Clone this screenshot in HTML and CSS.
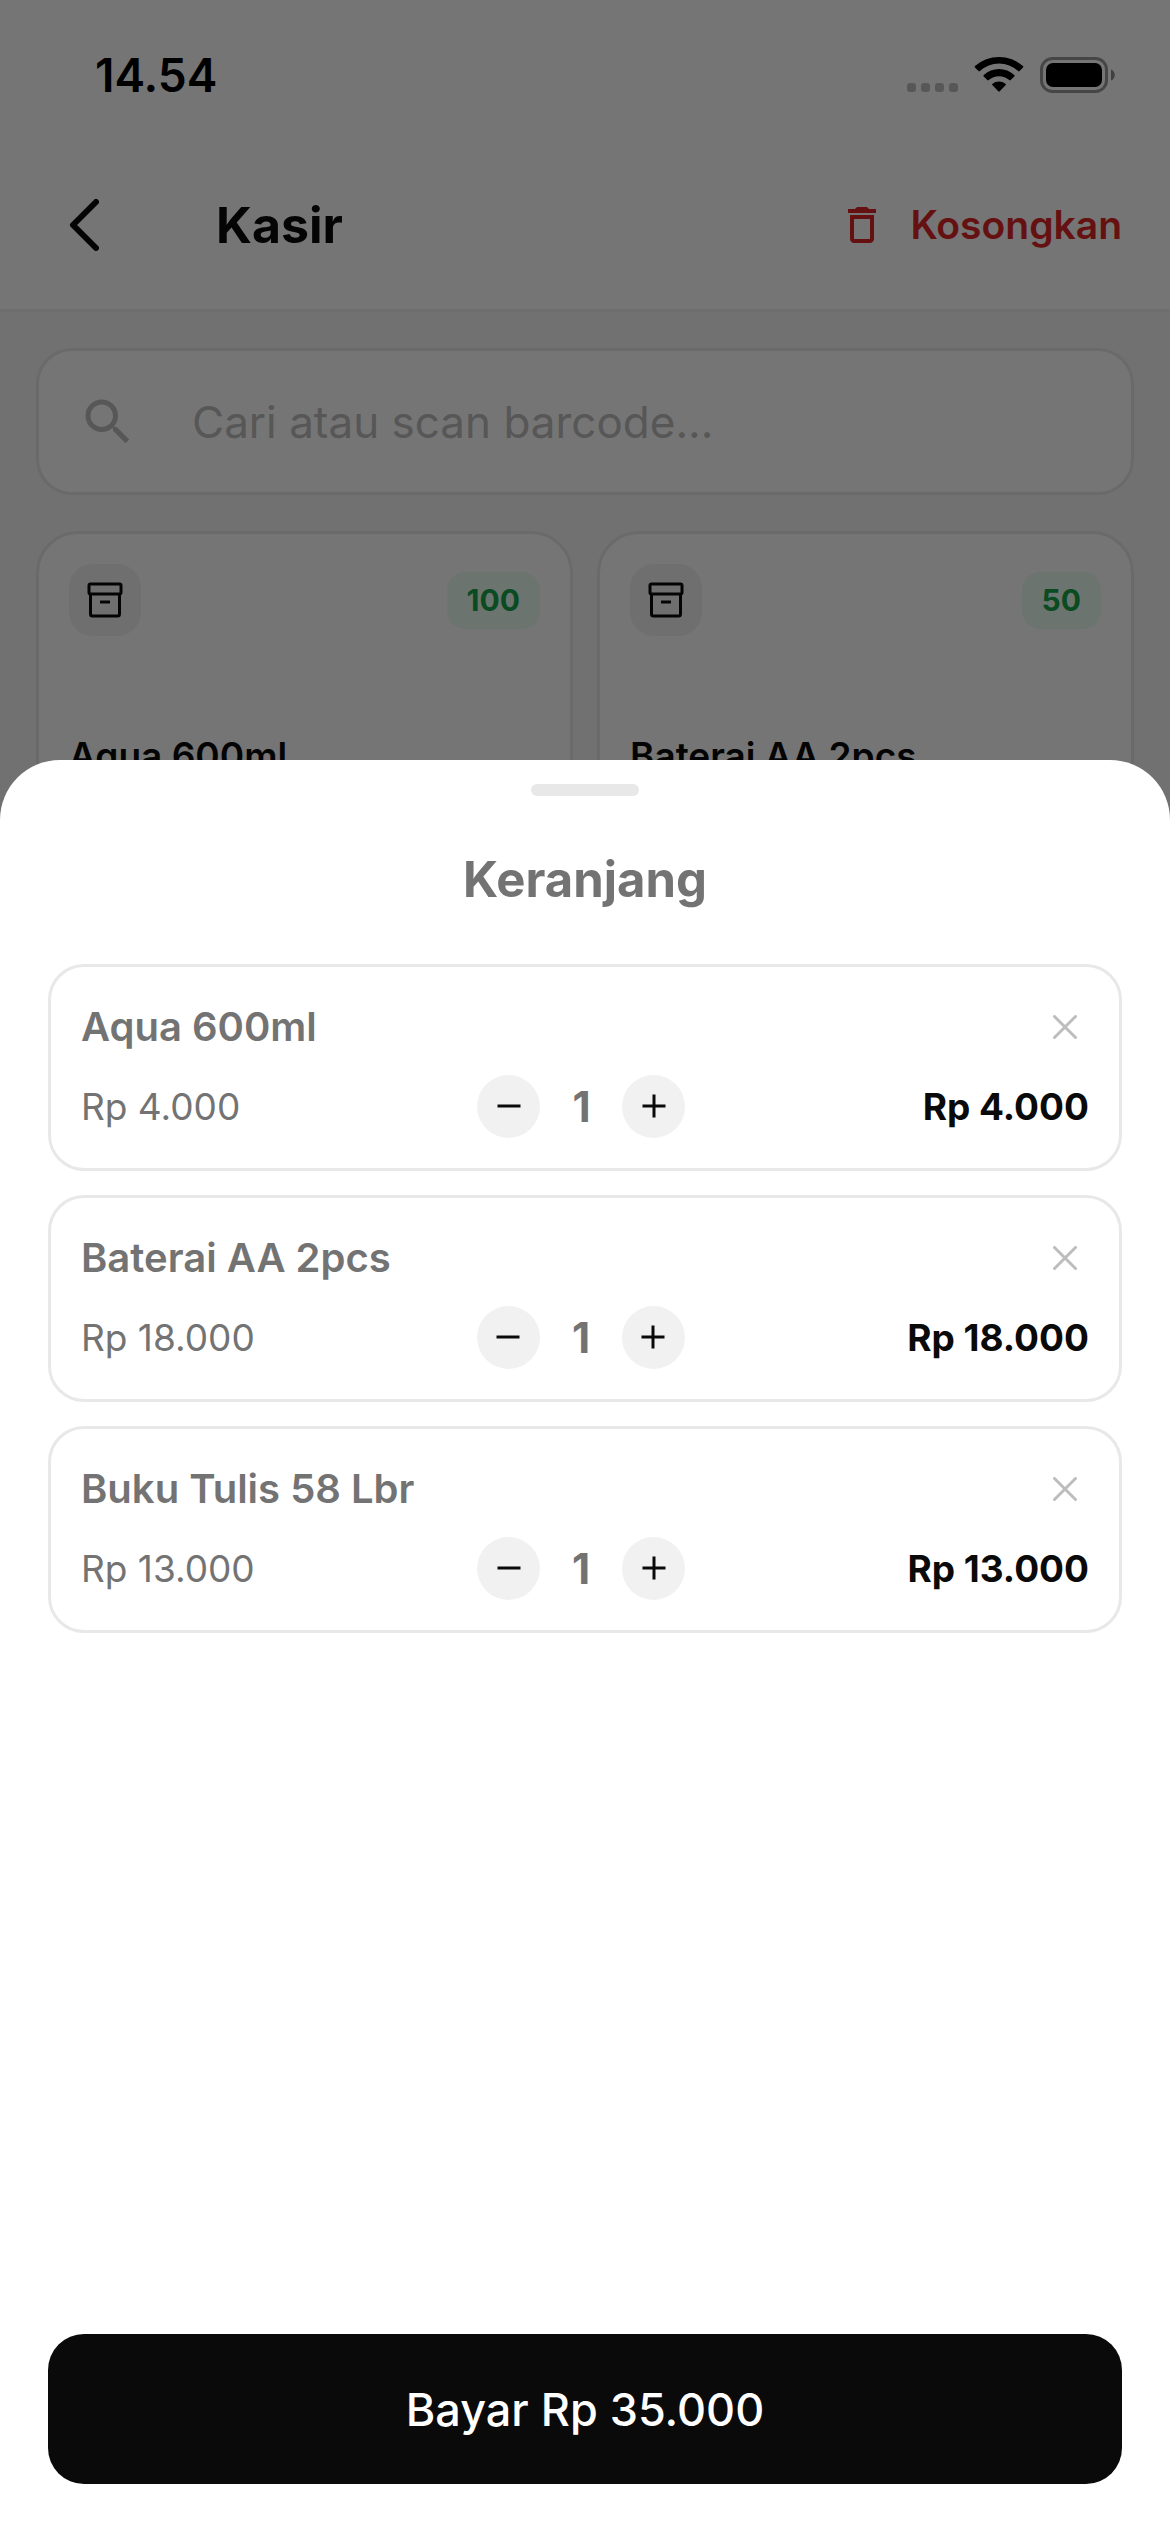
FILE: index.html
```html
<!DOCTYPE html>
<html lang="id">
<head>
  <meta charset="UTF-8" />
  <meta name="viewport" content="width=device-width, initial-scale=1.0"/>
  <title>Kasir</title>
  <link rel="stylesheet" href="styles.css">
</head>
<body>

<svg class="sprite" aria-hidden="true">
  <symbol id="box" viewBox="0 0 36 36">
    <rect x="2" y="2" width="32" height="10" rx="1.5"/>
    <path d="M3.500 12v20a2 2 0 0 0 2 2h25a2 2 0 0 0 2-2V12"/>
    <path d="M13 20h10"/>
  </symbol>
  <symbol id="minus" viewBox="0 0 24 24"><path d="M0.500 12h23"/></symbol>
  <symbol id="plus" viewBox="0 0 24 24"><path d="M0.500 12h23M12 0.500v23"/></symbol>
  <symbol id="close" viewBox="0 0 24 24"><path d="M1.500 1.500l21 21M22.500 1.500l-21 21"/></symbol>
</svg>

<div class="app">
  <header class="topbar">
    <div class="status">
      <span class="clock">14.54</span>
      <svg class="status-icons" viewBox="0 0 210 38" aria-hidden="true">
        <g opacity="0.25">
          <rect x="1" y="27" width="9" height="9" rx="3"/>
          <rect x="15" y="27" width="9" height="9" rx="3"/>
          <rect x="29" y="27" width="9" height="9" rx="3"/>
          <rect x="43" y="27" width="9" height="9" rx="3"/>
        </g>
        <path d="M69 11.500a1 1 0 0 1 0-1.400a36 36 0 0 1 48 0a1 1 0 0 1 0 1.400l-3.500 3.600a1 1 0 0 1-1.400 0a28 28 0 0 0-38.200 0a1 1 0 0 1-1.400 0z"/>
        <path d="M77.700 20.400a1 1 0 0 1 0-1.400a22.500 22.500 0 0 1 30.600 0a1 1 0 0 1 0 1.400l-3.600 3.700a1 1 0 0 1-1.400 0a15.500 15.500 0 0 0-20.600 0a1 1 0 0 1-1.400 0z"/>
        <path d="M86.500 29.300a1 1 0 0 1 0-1.500a10 10 0 0 1 13 0a1 1 0 0 1 0 1.500l-5.800 6a1 1 0 0 1-1.400 0z"/>
        <rect x="135.500" y="2.500" width="65" height="33" rx="11" fill="none" stroke="#000" stroke-width="3" opacity="0.4"/>
        <rect x="140" y="7" width="56" height="24" rx="7"/>
        <path d="M205 13.500c5 1.500 5 9.500 0 11z" opacity="0.45"/>
      </svg>
    </div>
    <nav class="appbar">
      <button class="back" aria-label="Kembali">
        <svg viewBox="0 0 30 52" aria-hidden="true"><path d="M27 3L4 26l23 23"/></svg>
      </button>
      <h1>Kasir</h1>
      <button class="clear">
        <svg viewBox="0 0 24 24" aria-hidden="true"><path d="M6 19c0 1.100.9 2 2 2h8c1.100 0 2-.9 2-2V7H6v12zM8 9h8v10H8V9zm7.500-5l-1-1h-5l-1 1H5v2h14V4z"/></svg>
        Kosongkan
      </button>
    </nav>
  </header>

  <main class="content">
    <label class="search">
      <svg viewBox="0 0 24 24" aria-hidden="true"><path d="M15.500 14h-.79l-.28-.27A6.471 6.471 0 0 0 16 9.500 6.500 6.500 0 1 0 9.500 16c1.610 0 3.090-.59 4.230-1.570l.27.28v.79l5 4.990L20.490 19l-4.990-5zm-6 0C7.010 14 5 11.990 5 9.500S7.010 5 9.500 5 14 7.010 14 9.500 11.990 14 9.500 14z"/></svg>
      <input type="text" aria-label="Cari produk" placeholder="Cari atau scan barcode...">
    </label>

    <div class="products">
      <article class="product">
        <div class="product-top">
          <span class="tile"><svg aria-hidden="true"><use href="#box"/></svg></span>
          <span class="stock">100</span>
        </div>
        <h2>Aqua 600ml</h2>
      </article>
      <article class="product">
        <div class="product-top">
          <span class="tile"><svg aria-hidden="true"><use href="#box"/></svg></span>
          <span class="stock">50</span>
        </div>
        <h2>Baterai AA 2pcs</h2>
      </article>
    </div>
  </main>
</div>

<div class="scrim"></div>

<section class="sheet" role="dialog" aria-labelledby="cart-title">
  <div class="handle"></div>
  <h2 class="sheet-title" id="cart-title">Keranjang</h2>

  <ul class="cart">
    <li class="item">
      <div class="item-row item-head">
        <h3>Aqua 600ml</h3>
        <button class="remove" aria-label="Hapus Aqua 600ml"><svg aria-hidden="true"><use href="#close"/></svg></button>
      </div>
      <div class="item-row">
        <span class="price">Rp 4.000</span>
        <div class="qty">
          <button aria-label="Kurangi"><svg aria-hidden="true"><use href="#minus"/></svg></button>
          <span>1</span>
          <button aria-label="Tambah"><svg aria-hidden="true"><use href="#plus"/></svg></button>
        </div>
        <span class="total">Rp 4.000</span>
      </div>
    </li>
    <li class="item">
      <div class="item-row item-head">
        <h3>Baterai AA 2pcs</h3>
        <button class="remove" aria-label="Hapus Baterai AA 2pcs"><svg aria-hidden="true"><use href="#close"/></svg></button>
      </div>
      <div class="item-row">
        <span class="price">Rp 18.000</span>
        <div class="qty">
          <button aria-label="Kurangi"><svg aria-hidden="true"><use href="#minus"/></svg></button>
          <span>1</span>
          <button aria-label="Tambah"><svg aria-hidden="true"><use href="#plus"/></svg></button>
        </div>
        <span class="total">Rp 18.000</span>
      </div>
    </li>
    <li class="item">
      <div class="item-row item-head">
        <h3>Buku Tulis 58 Lbr</h3>
        <button class="remove" aria-label="Hapus Buku Tulis 58 Lbr"><svg aria-hidden="true"><use href="#close"/></svg></button>
      </div>
      <div class="item-row">
        <span class="price">Rp 13.000</span>
        <div class="qty">
          <button aria-label="Kurangi"><svg aria-hidden="true"><use href="#minus"/></svg></button>
          <span>1</span>
          <button aria-label="Tambah"><svg aria-hidden="true"><use href="#plus"/></svg></button>
        </div>
        <span class="total">Rp 13.000</span>
      </div>
    </li>
  </ul>

  <button class="pay">Bayar Rp 35.000</button>
</section>

</body>
</html>
```
FILE: styles.css
```css
* { margin: 0; padding: 0; box-sizing: border-box; }

body {
  font-family: Inter, Roboto, sans-serif;
  background: #f6f6f6;
  color: #0a0a0a;
  height: 100vh;
  overflow: hidden;
}

button {
  font: inherit;
  color: inherit;
  background: none;
  border: none;
  cursor: pointer;
}

svg { display: block; }

.sprite {
  position: absolute;
  width: 0;
  height: 0;
}

/* header */
.topbar {
  background: #fff;
  border-bottom: 3px solid #f0f0f0;
}

.status {
  display: flex;
  justify-content: space-between;
  align-items: center;
  padding: 45px 54px 36px 95px;
  color: #000;
}

.clock {
  font-size: 46px;
  font-weight: 600;
  line-height: 60px;
}

.status-icons {
  width: 210px;
  height: 38px;
}

.appbar {
  display: flex;
  align-items: center;
  height: 168px;
  padding: 0 48px 0 12px;
}

.back {
  width: 144px;
  height: 144px;
  display: grid;
  place-items: center;
}

.back svg {
  width: 30px;
  height: 52px;
  fill: none;
  stroke: #0a0a0a;
  stroke-width: 6;
  stroke-linecap: round;
  stroke-linejoin: round;
}

.appbar h1 {
  flex: 1;
  padding-left: 60px;
  font-size: 50px;
  font-weight: 700;
}

.clear {
  display: flex;
  align-items: center;
  gap: 24px;
  font-size: 39px;
  font-weight: 600;
  line-height: 48px;
  color: #dc2626;
}

.clear svg {
  width: 48px;
  height: 48px;
  fill: #dc2626;
}

/* product list */
.content {
  display: flex;
  flex-direction: column;
  gap: 36px;
  padding: 36px;
}

.search {
  display: flex;
  align-items: center;
  gap: 54px;
  height: 147px;
  padding: 0 39px;
  background: #fff;
  border: 3px solid #e8e8e8;
  border-radius: 36px;
}

.search svg {
  width: 60px;
  height: 60px;
  fill: #bdbdbd;
}

.search input {
  flex: 1;
  min-width: 0;
  height: 54px;
  font: inherit;
  font-size: 44px;
  border: none;
  outline: none;
  background: none;
}

.search input::placeholder { color: #bdbdbd; }

.products {
  display: grid;
  grid-template-columns: 1fr 1fr;
  gap: 24px;
}

.product {
  padding: 30px;
  min-height: 420px;
  background: #fff;
  border: 3px solid #e8e8e8;
  border-radius: 42px;
}

.product-top {
  display: flex;
  justify-content: space-between;
  align-items: center;
  margin-bottom: 96px;
}

.tile {
  display: grid;
  place-items: center;
  width: 72px;
  height: 72px;
  background: #f1f1f1;
  border-radius: 24px;
}

.tile svg {
  width: 36px;
  height: 36px;
  fill: none;
  stroke: #0a0a0a;
  stroke-width: 3;
}

.stock {
  padding: 9px 20px;
  font-size: 30px;
  font-weight: 700;
  line-height: 39px;
  color: #16a34a;
  background: #ecfdf3;
  border-radius: 18px;
}

.product h2 {
  font-size: 37px;
  font-weight: 600;
  line-height: 48px;
}

/* cart sheet */
.scrim {
  position: fixed;
  inset: 0;
  background: rgba(0, 0, 0, 0.54);
}

.sheet {
  position: fixed;
  left: 0;
  right: 0;
  bottom: 0;
  height: 70vh;
  display: flex;
  flex-direction: column;
  padding: 24px 48px 48px;
  background: #fff;
  border-radius: 60px 60px 0 0;
}

.handle {
  align-self: center;
  width: 108px;
  height: 12px;
  background: #e8e8e8;
  border-radius: 6px;
}

.sheet-title {
  margin: 54px 0;
  font-size: 49px;
  font-weight: 700;
  line-height: 60px;
  text-align: center;
  color: #737373;
}

.cart {
  flex: 1;
  display: flex;
  flex-direction: column;
  gap: 24px;
  list-style: none;
}

.item {
  display: flex;
  flex-direction: column;
  gap: 18px;
  padding: 30px;
  border: 3px solid #e8e8e8;
  border-radius: 36px;
}

.item-row {
  display: flex;
  justify-content: space-between;
  align-items: center;
  font-size: 37px;
}

.item h3 {
  font-size: 40px;
  font-weight: 600;
  line-height: 60px;
  color: #737373;
}

.remove {
  padding: 12px;
}

.remove svg {
  width: 24px;
  height: 24px;
  stroke: #bdbdbd;
  stroke-width: 3;
  stroke-linecap: round;
}

.price { color: #737373; }

.total { font-weight: 700; }

.qty {
  display: flex;
  align-items: center;
  font-size: 42px;
  font-weight: 700;
  color: #737373;
}

.qty span {
  min-width: 82px;
  text-align: center;
}

.qty button {
  display: grid;
  place-items: center;
  width: 63px;
  height: 63px;
  background: #f1f1f1;
  border-radius: 50%;
}

.qty svg {
  width: 24px;
  height: 24px;
  stroke: #0a0a0a;
  stroke-width: 3;
}

.pay {
  height: 150px;
  font-size: 45px;
  font-weight: 500;
  color: #fff;
  background: #0a0a0a;
  border-radius: 36px;
}
```
